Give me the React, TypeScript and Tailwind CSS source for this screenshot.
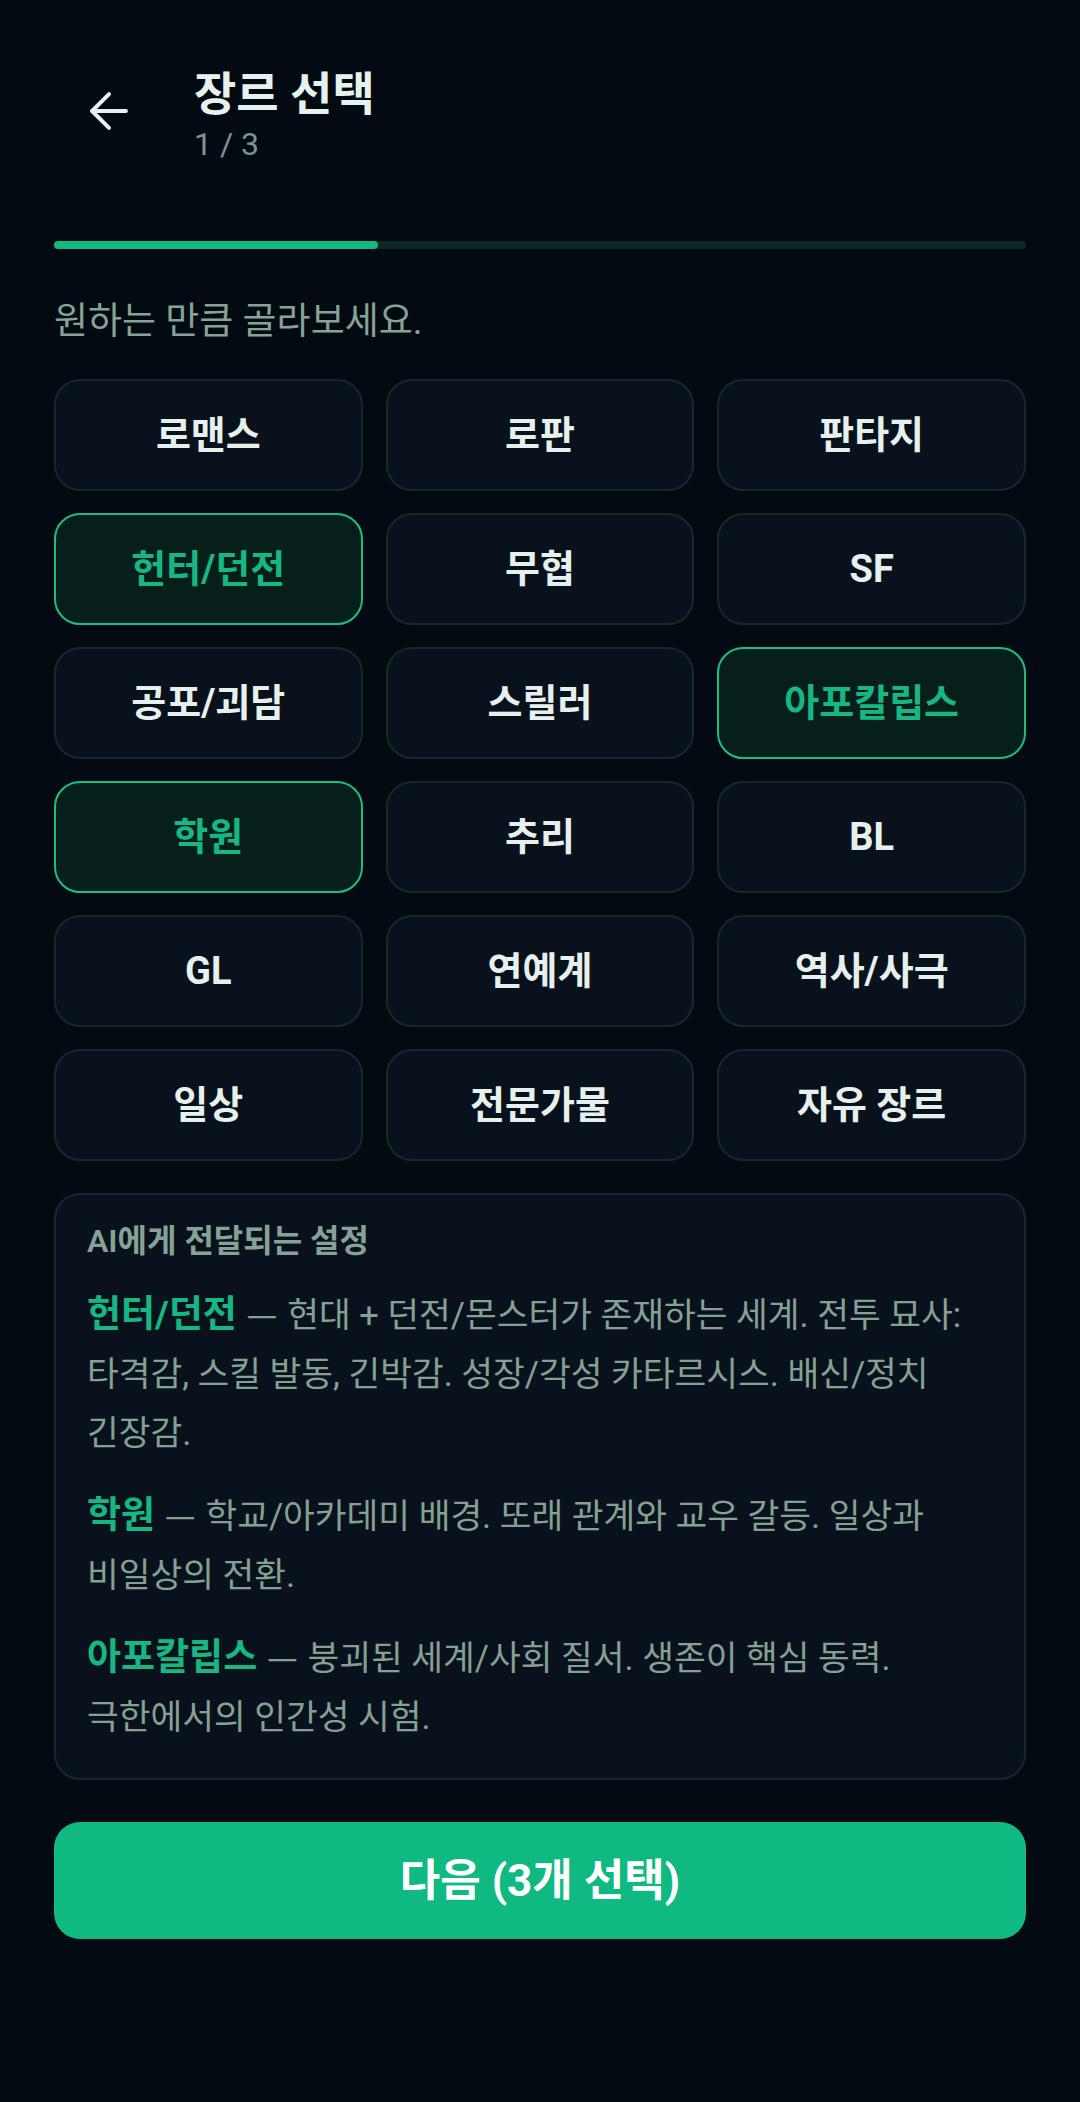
import React from "react";

const genres: { name: string; selected?: boolean }[] = [
  { name: "로맨스" },
  { name: "로판" },
  { name: "판타지" },
  { name: "헌터/던전", selected: true },
  { name: "무협" },
  { name: "SF" },
  { name: "공포/괴담" },
  { name: "스릴러" },
  { name: "아포칼립스", selected: true },
  { name: "학원", selected: true },
  { name: "추리" },
  { name: "BL" },
  { name: "GL" },
  { name: "연예계" },
  { name: "역사/사극" },
  { name: "일상" },
  { name: "전문가물" },
  { name: "자유 장르" },
];

const font = {
  fontFamily: 'Roboto, "Noto Sans CJK KR", "Noto Sans", sans-serif',
};

const dashFont = {
  fontFamily: '"Noto Sans CJK KR", sans-serif',
};

function Dash() {
  return (
    <span className="leading-none px-[2px]" style={dashFont}>
      {" — "}
    </span>
  );
}

function Label({ children }: { children: React.ReactNode }) {
  return (
    <span className="text-[37px] leading-none font-bold text-[#16b783]">
      {children}
    </span>
  );
}

export default function App() {
  return (
    <div
      className="min-h-[2102px] w-full bg-[#040a12] px-[54px] pb-[160px]"
      style={font}
    >
      {/* Header */}
      <div className="flex items-center pt-[69px]">
        <div className="w-[140px] pl-[26px] mb-[12px]">
          <svg
            width="58"
            height="58"
            viewBox="0 0 24 24"
            fill="none"
            stroke="#e6f2ee"
            strokeWidth="1.65"
            strokeLinecap="round"
            strokeLinejoin="round"
          >
            <path d="m12 19-7-7 7-7" />
            <path d="M19 12H5" />
          </svg>
        </div>
        <div className="flex flex-col">
          <div className="text-[46px] leading-[50px] font-bold text-[#e6f2ee]">
            장르 선택
          </div>
          <div className="mt-[5px] text-[32px] leading-[40px] text-[#7b978b]">
            1 / 3
          </div>
        </div>
      </div>

      {/* Progress */}
      <div className="mt-[77px] h-[8px] w-full rounded-full bg-[#0b2924]">
        <div className="h-full w-1/3 rounded-full bg-[#10b981]" />
      </div>

      {/* Subtitle */}
      <div className="mt-[49px] text-[37px] leading-[48px] text-[#86a396]">
        원하는 만큼 골라보세요.
      </div>

      {/* Grid */}
      <div className="mt-[33px] grid grid-cols-3 gap-x-[23px] gap-y-[22px]">
        {genres.map((g) =>
          g.selected ? (
            <div
              key={g.name}
              className="flex h-[112px] items-center justify-center rounded-[26px] border-[2.5px] border-[#1ebd88] bg-[#061f1b] text-[38px] font-bold text-[#16b783]"
            >
              {g.name}
            </div>
          ) : (
            <div
              key={g.name}
              className="flex h-[112px] items-center justify-center rounded-[26px] border-2 border-[#132a2b] bg-[#09121c] text-[38px] font-bold text-[#e6f1ed]"
            >
              {g.name}
            </div>
          )
        )}
      </div>

      {/* Info box */}
      <div className="mt-[32px] rounded-[26px] border-2 border-[#132a2b] bg-[#09121c] pl-[31px] pr-[20px] pt-[26px] pb-[31px]">
        <div className="text-[32px] leading-[40px] font-semibold text-[#86a296]">
          AI에게 전달되는 설정
        </div>
        <div className="mt-[25px] whitespace-nowrap text-[34.5px] leading-[59px] text-[#84a193]">
          <Label>헌터/던전</Label>
          <Dash />
          {"현대 + 던전/몬스터가 존재하는 세계. 전투 묘사:"}
          <br />
          타격감, 스킬 발동, 긴박감. 성장/각성 카타르시스. 배신/정치
          <br />
          긴장감.
        </div>
        <div className="mt-[24px] whitespace-nowrap text-[34.5px] leading-[59px] text-[#84a193]">
          <Label>학원</Label>
          <Dash />
          {"학교/아카데미 배경. 또래 관계와 교우 갈등. 일상과"}
          <br />
          비일상의 전환.
        </div>
        <div className="mt-[24px] whitespace-nowrap text-[34.5px] leading-[59px] text-[#84a193]">
          <Label>아포칼립스</Label>
          <Dash />
          {"붕괴된 세계/사회 질서. 생존이 핵심 동력."}
          <br />
          극한에서의 인간성 시험.
        </div>
      </div>

      {/* CTA */}
      <div className="mt-[42px] flex h-[117px] items-center justify-center rounded-[26px] bg-[#10b981] text-[44px] font-bold text-white">
        다음 (3개 선택)
      </div>
    </div>
  );
}
